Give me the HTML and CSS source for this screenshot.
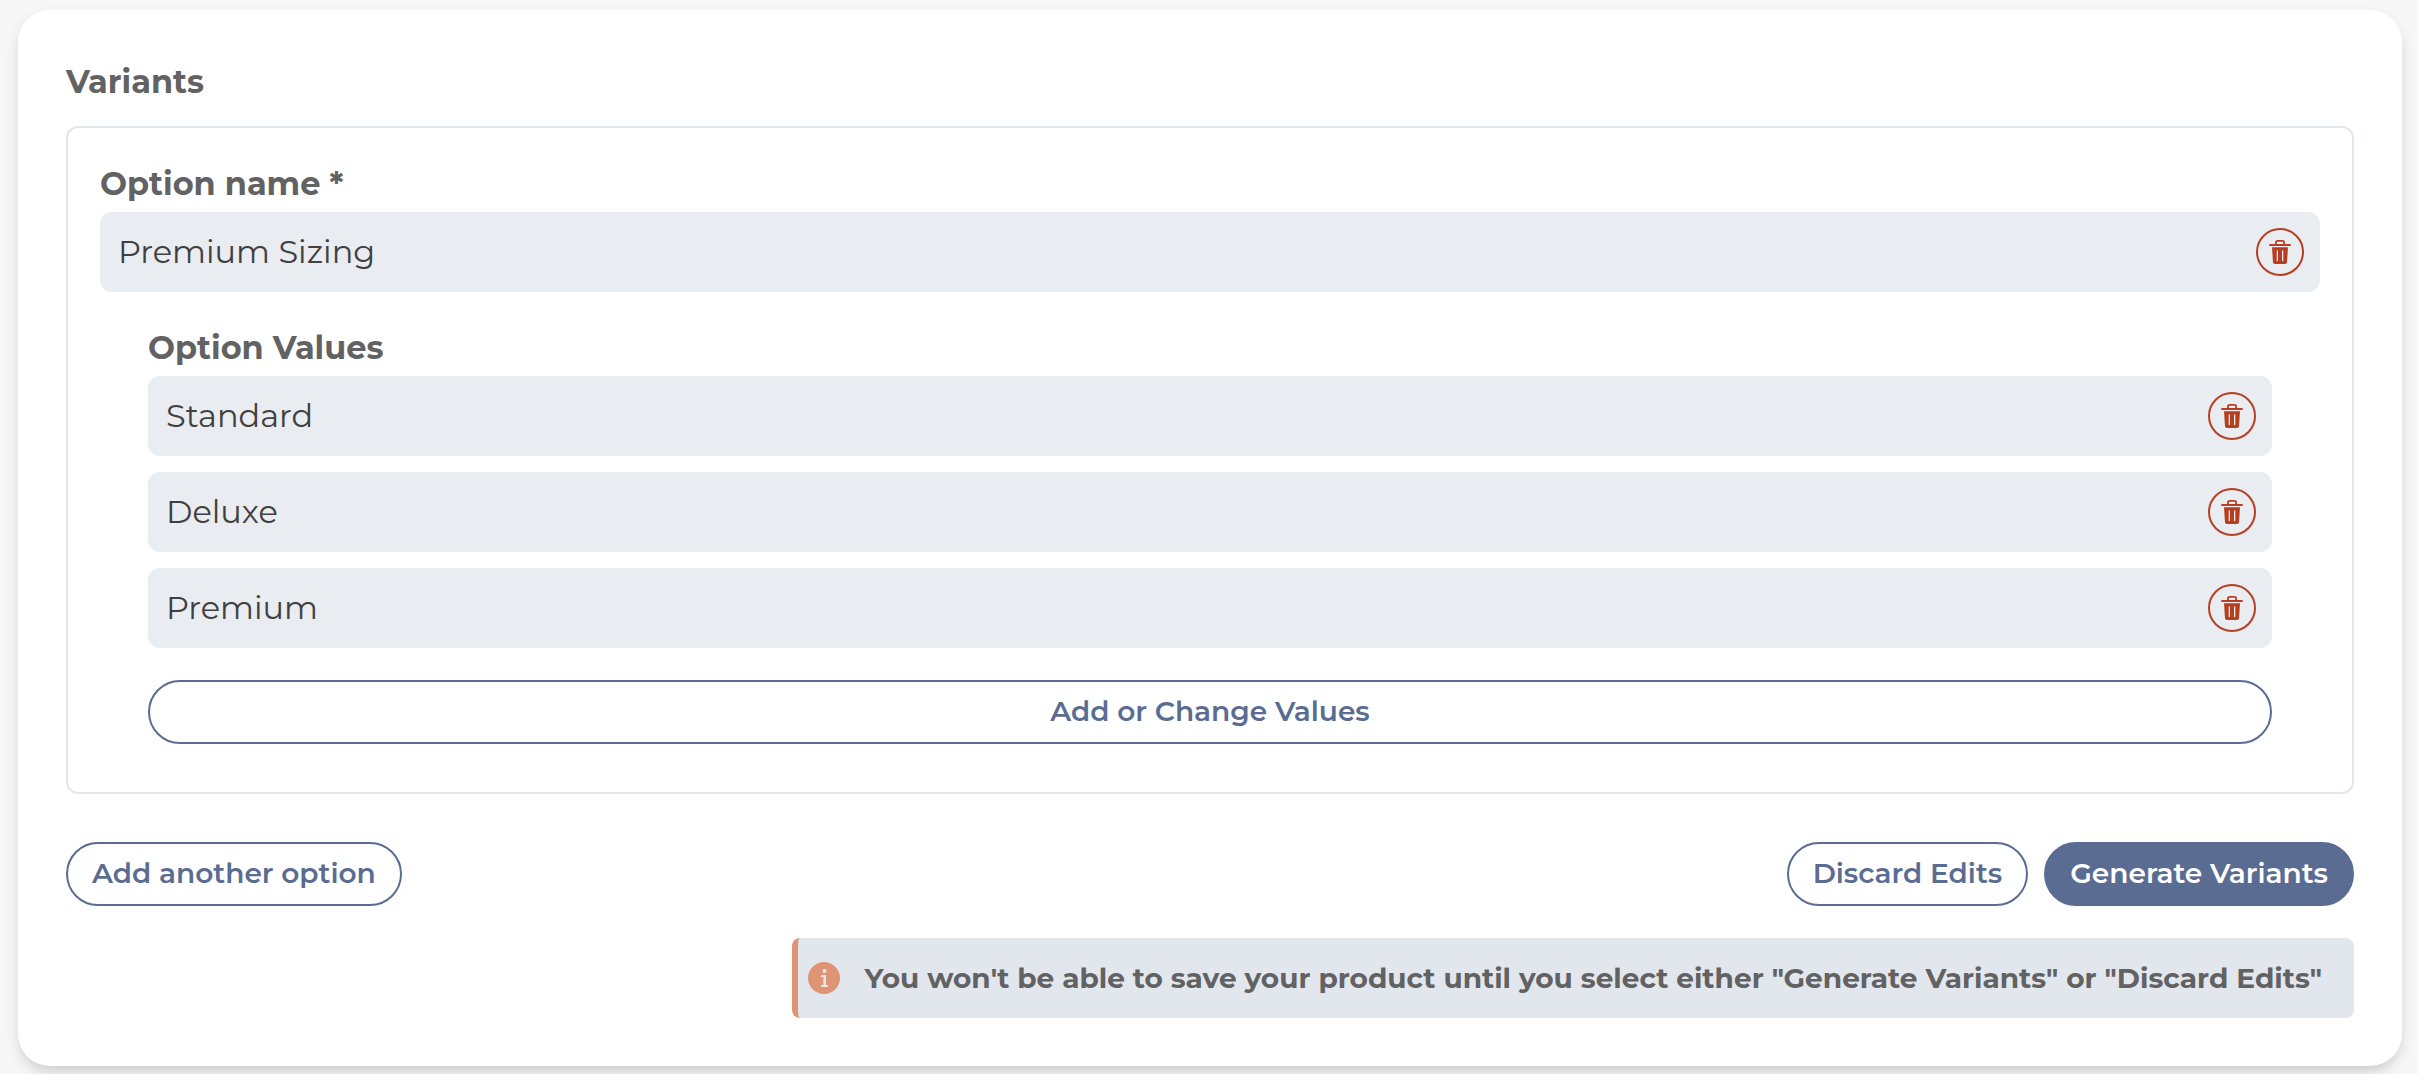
FILE: index.html
```html
<!DOCTYPE html>
<html lang="en">
<head>
<meta charset="utf-8">
<meta name="viewport" content="width=device-width, initial-scale=1">
<title>Variants</title>
<link rel="stylesheet" href="styles.css">
</head>
<body>
<svg class="sprite" aria-hidden="true">
  <symbol id="trash" viewBox="0 0 24 26">
    <path d="M7.900 5V3.400A1.500 1.500 0 0 1 9.400 1.900h5.200A1.500 1.500 0 0 1 16.100 3.400V5" fill="none" stroke="currentColor" stroke-width="1.800"/>
    <rect x="1.300" y="5" width="21.400" height="2" rx=".6" fill="currentColor"/>
    <path fill="currentColor" fill-rule="evenodd" d="M4 8.200h16L19 23.200a2 2 0 0 1-2 1.800H7a2 2 0 0 1-2-1.800ZM8.700 11.500v10.500h1.300v-10.500ZM14 11.500v10.500h1.300v-10.500Z"/>
  </symbol>
</svg>
<main class="card">
  <h2 class="card-title">Variants</h2>
  <section class="option">
    <label class="label" for="option-name">Option name *</label>
    <div class="field">
      <input class="input" id="option-name" type="text" value="Premium Sizing">
      <button class="delete" type="button" aria-label="Delete option"><svg class="delete-icon" aria-hidden="true"><use href="#trash"/></svg></button>
    </div>
    <div class="values" role="group" aria-labelledby="values-label">
      <h3 class="label" id="values-label">Option Values</h3>
      <div class="value-list">
        <div class="field">
          <input class="input" type="text" value="Standard" aria-label="Value 1">
          <button class="delete" type="button" aria-label="Delete Standard"><svg class="delete-icon" aria-hidden="true"><use href="#trash"/></svg></button>
        </div>
        <div class="field">
          <input class="input" type="text" value="Deluxe" aria-label="Value 2">
          <button class="delete" type="button" aria-label="Delete Deluxe"><svg class="delete-icon" aria-hidden="true"><use href="#trash"/></svg></button>
        </div>
        <div class="field">
          <input class="input" type="text" value="Premium" aria-label="Value 3">
          <button class="delete" type="button" aria-label="Delete Premium"><svg class="delete-icon" aria-hidden="true"><use href="#trash"/></svg></button>
        </div>
      </div>
      <button class="button button-wide" type="button">Add or Change Values</button>
    </div>
  </section>
  <div class="actions">
    <button class="button" type="button">Add another option</button>
    <div class="actions-end">
      <button class="button" type="button">Discard Edits</button>
      <button class="button button-primary" type="button">Generate Variants</button>
    </div>
  </div>
  <div class="notice" role="status">
    <svg class="notice-icon" viewBox="0 0 32 32" aria-hidden="true">
      <circle cx="16" cy="16" r="16" fill="#de9475"/>
      <circle cx="16.500" cy="9" r="2" fill="#e2e7ee"/>
      <path d="M13 13h5v10h2v2h-7v-2h2.400v-8H13Z" fill="#e2e7ee"/>
    </svg>
    <p class="notice-text">You won't be able to save your product until you select either "Generate Variants" or "Discard Edits"</p>
  </div>
</main>
</body>
</html>
```
FILE: styles.css
```css
*, *::before, *::after {
  box-sizing: border-box;
}

body {
  margin: 0;
  padding: 10px 16px 8px 18px;
  background: #f7f7f7;
  color: #626262;
  font-family: Montserrat, Inter, sans-serif;
}

.sprite {
  display: none;
}

.card {
  padding: 48px;
  border-radius: 32px;
  background: #fff;
  box-shadow: 0 6px 16px rgba(0, 0, 0, 0.09), 0 8px 12px -4px rgba(0, 0, 0, 0.1);
}

.card-title,
.label {
  display: block;
  margin: 0;
  font-size: 32px;
  font-weight: 700;
  line-height: 48px;
}

.card-title {
  margin-bottom: 20px;
}

.label {
  margin-bottom: 4px;
}

.option {
  padding: 32px 32px 48px;
  border: 2px solid #e2e7ee;
  border-radius: 12px;
}

.field {
  display: flex;
  align-items: center;
  height: 80px;
  padding: 0 16px 0 18px;
  border-radius: 12px;
  background: #e9ecf1;
}

.input {
  flex: 1;
  min-width: 0;
  padding: 0;
  border: 0;
  background: none;
  color: #404040;
  font: 400 32px/40px Montserrat, Inter, sans-serif;
}

.delete {
  display: grid;
  place-items: center;
  width: 48px;
  height: 48px;
  padding: 0;
  border: 2px solid #b83e22;
  border-radius: 50%;
  background: none;
  color: #b83e22;
}

.delete-icon {
  width: 24px;
  height: 26px;
}

.values {
  margin-top: 32px;
  padding: 0 48px;
}

.value-list {
  display: grid;
  gap: 16px;
}

.button {
  height: 64px;
  padding: 0 24px 2px;
  border: 2px solid #5b6c92;
  border-radius: 32px;
  background: #fff;
  color: #5b6c92;
  font: 600 28px/36px Montserrat, Inter, sans-serif;
}

.button-wide {
  width: 100%;
  margin-top: 32px;
}

.button-primary {
  background: #5b6c92;
  color: #fff;
}

.actions {
  display: flex;
  flex-wrap: wrap;
  justify-content: space-between;
  gap: 16px;
  margin-top: 48px;
}

.actions-end {
  display: flex;
  gap: 16px;
}

.notice {
  display: flex;
  align-items: center;
  gap: 24px;
  width: fit-content;
  min-height: 80px;
  margin: 32px 0 0 auto;
  padding: 16px 32px 16px 10px;
  border-left: 6px solid #de9475;
  border-radius: 8px;
  background: #e2e7ee;
}

.notice-icon {
  flex: none;
  width: 32px;
  height: 32px;
}

.notice-text {
  margin: 0;
  font-size: 28px;
  font-weight: 700;
  line-height: 36px;
}
```
